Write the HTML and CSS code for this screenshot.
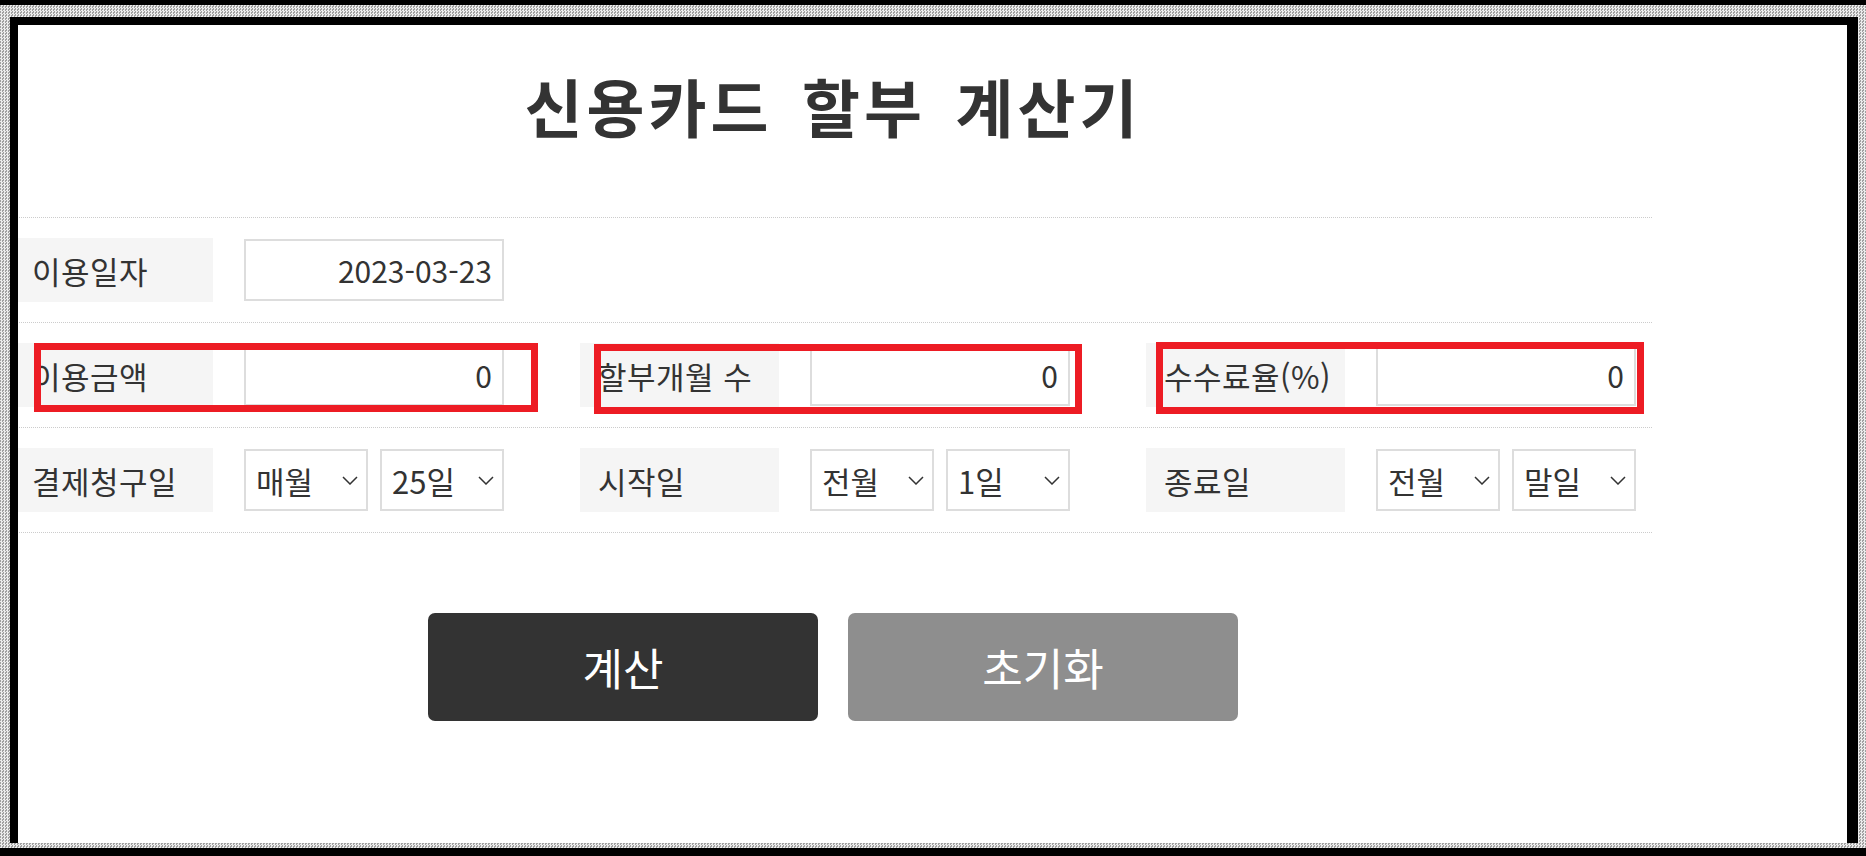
FILE: index.html
```html
<!DOCTYPE html>
<html lang="ko">
<head>
    <meta charset="UTF-8">
    <meta name="viewport" content="width=device-width, initial-scale=1.0">
    <title>신용카드 할부 계산기</title>
    <link rel="stylesheet" href="styles.css">
</head>
<body>
    <div class="paper">
        <div class="screen">
            <div class="page">
                <h1>신용카드 할부 계산기</h1>
                <form class="calc">
                    <div class="row">
                        <div class="field">
                            <label class="label" for="useDate">이용일자</label>
                            <input class="box" type="text" id="useDate" value="2023-03-23">
                        </div>
                    </div>
                    <div class="row">
                        <div class="field">
                            <label class="label" for="amount">이용금액</label>
                            <input class="box" type="text" id="amount" value="0">
                        </div>
                        <div class="field">
                            <label class="label" for="months">할부개월 수</label>
                            <input class="box" type="text" id="months" value="0">
                        </div>
                        <div class="field">
                            <label class="label" for="rate">수수료율(%)</label>
                            <input class="box" type="text" id="rate" value="0">
                        </div>
                    </div>
                    <div class="row">
                        <div class="field">
                            <span class="label">결제청구일</span>
                            <div class="pair">
                                <div class="select">
                                    <select><option>매월</option></select>
                                    <svg class="chevron" width="16" height="9" viewBox="0 0 16 9"><path d="M1 1 L8 8 L15 1" /></svg>
                                </div>
                                <div class="select">
                                    <select><option>25일</option></select>
                                    <svg class="chevron" width="16" height="9" viewBox="0 0 16 9"><path d="M1 1 L8 8 L15 1" /></svg>
                                </div>
                            </div>
                        </div>
                        <div class="field">
                            <span class="label">시작일</span>
                            <div class="pair">
                                <div class="select">
                                    <select><option>전월</option></select>
                                    <svg class="chevron" width="16" height="9" viewBox="0 0 16 9"><path d="M1 1 L8 8 L15 1" /></svg>
                                </div>
                                <div class="select">
                                    <select><option>1일</option></select>
                                    <svg class="chevron" width="16" height="9" viewBox="0 0 16 9"><path d="M1 1 L8 8 L15 1" /></svg>
                                </div>
                            </div>
                        </div>
                        <div class="field">
                            <span class="label">종료일</span>
                            <div class="pair">
                                <div class="select">
                                    <select><option>전월</option></select>
                                    <svg class="chevron" width="16" height="9" viewBox="0 0 16 9"><path d="M1 1 L8 8 L15 1" /></svg>
                                </div>
                                <div class="select">
                                    <select><option>말일</option></select>
                                    <svg class="chevron" width="16" height="9" viewBox="0 0 16 9"><path d="M1 1 L8 8 L15 1" /></svg>
                                </div>
                            </div>
                        </div>
                    </div>
                    <div class="actions">
                        <button type="button" class="btn btn-calc">계산</button>
                        <button type="reset" class="btn btn-reset">초기화</button>
                    </div>
                </form>
            </div>

            <!-- red annotation boxes -->
            <span class="mark mark-1"></span>
            <span class="mark mark-2"></span>
            <span class="mark mark-3"></span>
        </div>
    </div>
</body>
</html>
```

FILE: styles.css
```css
body {
    margin: 0;
    padding-top: 5px;
    background-color: #000000;
    height: 856px;
    box-sizing: border-box;
    overflow: hidden;
    font-family: "Noto Sans CJK KR", "Noto Sans", sans-serif;
    color: #333333;
}

/* torn screenshot edge */
.paper {
    background-color: #cfcfcf;
    background-image: repeating-conic-gradient(#ececec 0 25%, #a0a0a0 0 50%);
    background-size: 3px 3px;
    padding: 12px 8px 5px 10px;
}

.screen {
    position: relative;
    height: 818px;
    background-color: #ffffff;
    border: solid #000000;
    border-width: 8px 11px 0 8px;
    overflow: hidden;
}

.page {
    width: 1638px;
    margin-left: -4px;
    padding-top: 40px;
}

h1 {
    margin: 0;
    font-size: 63px;
    font-weight: 700;
    line-height: 80px;
    letter-spacing: 4px;
    word-spacing: 8px;
    text-align: center;
    color: #333333;
}

.calc {
    margin-top: 72px;
}

.row {
    display: flex;
    gap: 76px;
    padding: 20px 0;
    border-top: 1px dotted #cccccc;
}

.row:nth-child(3) {
    border-bottom: 1px dotted #cccccc;
}

.field {
    display: flex;
    align-items: center;
    gap: 31px;
    width: 490px;
}

.label {
    display: flex;
    align-items: center;
    width: 199px;
    height: 64px;
    padding-left: 18px;
    box-sizing: border-box;
    background-color: #f5f5f5;
    font-size: 31px;
    letter-spacing: 0.5px;
    color: #333333;
    white-space: nowrap;
}

.box {
    width: 260px;
    height: 62px;
    box-sizing: border-box;
    border: 2px solid #dddddd;
    padding: 0 10px;
    font-family: inherit;
    font-size: 30px;
    color: #333333;
    text-align: right;
    outline: none;
}

.pair {
    display: flex;
    gap: 12px;
}

.select {
    position: relative;
    width: 124px;
    height: 62px;
}

.select select {
    appearance: none;
    -webkit-appearance: none;
    width: 100%;
    height: 100%;
    border: 2px solid #dddddd;
    border-radius: 0;
    background-color: #ffffff;
    padding: 0 0 0 10px;
    font-family: inherit;
    font-size: 31px;
    color: #333333;
}

.chevron {
    position: absolute;
    right: 10px;
    top: 27px;
    pointer-events: none;
}

.chevron path {
    fill: none;
    stroke: #333333;
    stroke-width: 1.5;
}

.actions {
    display: flex;
    justify-content: center;
    gap: 30px;
    margin-top: 80px;
}

.btn {
    width: 390px;
    height: 108px;
    border: none;
    border-radius: 7px;
    font-family: inherit;
    font-size: 44px;
    color: #ffffff;
    cursor: pointer;
}

.btn-calc {
    background-color: #333333;
}

.btn-reset {
    background-color: #8e8e8e;
}

.mark {
    position: absolute;
    box-sizing: border-box;
    border: 7px solid #ed1c24;
}

.mark-1 {
    left: 16px;
    top: 318px;
    width: 504px;
    height: 69px;
}

.mark-2 {
    left: 576px;
    top: 319px;
    width: 488px;
    height: 70px;
}

.mark-3 {
    left: 1138px;
    top: 317px;
    width: 488px;
    height: 72px;
}
```
